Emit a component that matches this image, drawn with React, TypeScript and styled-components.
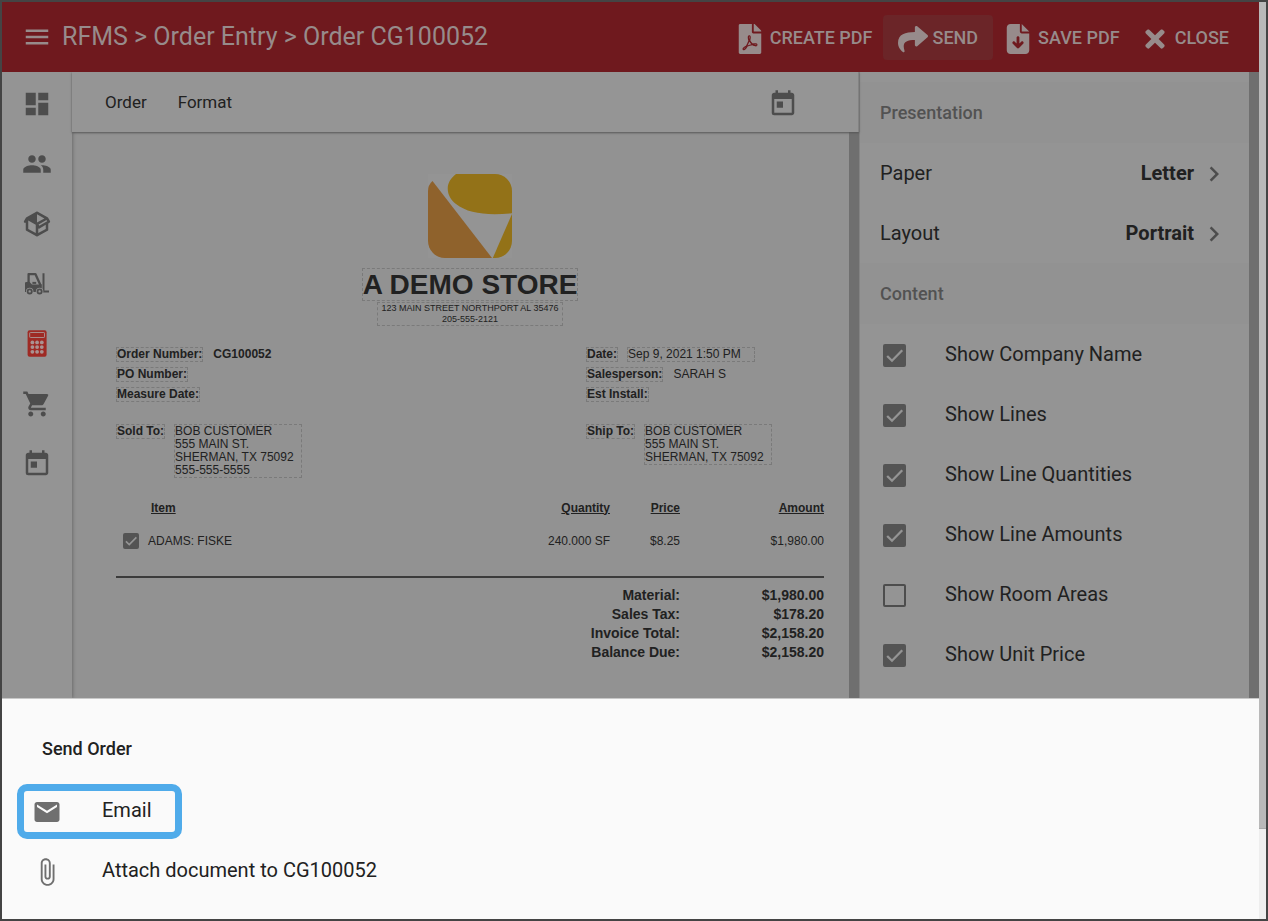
import React from 'react';
import styled, { createGlobalStyle, css } from 'styled-components';
import {
  MdAttachFile,
  MdChevronRight,
  MdDashboard,
  MdEmail,
  MdMenu,
  MdPeople,
  MdShoppingCart,
  MdToday,
} from 'react-icons/md';
import { FaFilePdf, FaShare, FaTimes } from 'react-icons/fa';
import { FaFileArrowDown } from 'react-icons/fa6';

const color = {
  frame: '#444444',
  header: '#6f191e',
  headerActive: '#6b2528',
  headerText: '#978b8b',
  surface: '#949494',
  page: '#929292',
  icon: '#4d4d4d',
  text: '#212121',
  muted: '#525252',
  gutter: '#6f6f6f',
};

const GlobalStyle = createGlobalStyle`
  * { box-sizing: border-box; }
  body { margin: 0; background: ${color.surface}; }
  button { font: inherit; color: inherit; background: none; border: 0; padding: 0; cursor: pointer; text-align: left; }
  svg { display: block; flex: none; }
`;

const Frame = styled.div`
  display: flex;
  min-height: 100vh;
  border: 2px solid ${color.frame};
  font-family: Roboto, 'Liberation Sans', sans-serif;
  color: ${color.text};
`;

const Content = styled.div`
  flex: 1;
  min-width: 0;
  display: flex;
  flex-direction: column;
`;

const ScrollTrack = styled.div`
  width: 7px;
  background: #eeeeee;
`;

const ScrollThumb = styled.div`
  height: 90.2%;
  background: #b9b9b9;
  border-bottom: 1px solid #a8a8a8;
`;

const Header = styled.header`
  display: flex;
  align-items: center;
  height: 70px;
  padding: 0 20px;
  background: ${color.header};
  color: ${color.headerText};
`;

const Title = styled.h1`
  flex: 1;
  margin: 0 0 0 10px;
  font-size: 25px;
  font-weight: 400;
  line-height: 30px;
  white-space: nowrap;
`;

const Actions = styled.div`
  display: flex;
  align-items: center;
`;

const Action = styled.button<{ $active?: boolean }>`
  display: flex;
  align-items: center;
  gap: 5px;
  height: 45px;
  padding: 0 ${p => (p.$active ? 15 : 10)}px;
  border-radius: 4px;
  background: ${p => (p.$active ? color.headerActive : 'transparent')};
  font-size: 18px;
  font-weight: 500;
  white-space: nowrap;
`;

const ActionIcon = styled.span`
  display: flex;
  justify-content: center;
  width: 30px;
  padding-top: 3px;
`;

const Workspace = styled.div`
  flex: 1;
  display: flex;
  overflow: hidden;
`;

const Sidebar = styled.nav`
  display: flex;
  flex-direction: column;
  width: 70px;
  padding-top: 2px;
  background: ${color.surface};
  box-shadow: 1px 0 3px #6c6c6c;
  z-index: 1;
`;

const NavButton = styled.button<{ $active?: boolean }>`
  display: flex;
  align-items: center;
  justify-content: center;
  height: 60px;
  color: ${p => (p.$active ? '#9e2a24' : color.icon)};
`;

const Main = styled.main`
  flex: 1;
  min-width: 0;
  display: flex;
  flex-direction: column;
`;

const Toolbar = styled.div`
  display: flex;
  align-items: center;
  gap: 31px;
  height: 60px;
  padding: 0 60px 0 33px;
  background: #959595;
  border-right: 1px solid #838383;
  box-shadow: 0 1px 2px #555555;
  color: ${color.icon};
  z-index: 1;
`;

const ToolbarMenu = styled.button`
  font-size: 17px;
  line-height: 24px;
  color: ${color.text};
`;

const ToolbarIcon = styled.button`
  margin-left: auto;
  padding-top: 3px;
`;

const DocumentPane = styled.div`
  flex: 1;
  padding: 42px 25px 30px 44px;
  background: ${color.page};
  border-right: 10px solid ${color.gutter};
  font-family: 'Liberation Sans', Arial, sans-serif;
  font-size: 12px;
  line-height: 13px;
`;

const dashed = css`
  border: 1px dashed #7a7a7a;
`;

const Letterhead = styled.div`
  display: flex;
  flex-direction: column;
  align-items: center;
  text-align: center;
`;

const StoreName = styled.h2`
  ${dashed}
  margin: 10px 0 1px;
  font-size: 28px;
  line-height: 31px;
  white-space: nowrap;
`;

const StoreAddress = styled.address`
  ${dashed}
  padding: 0 3px;
  font-size: 9px;
  font-style: normal;
  line-height: 11px;
  white-space: nowrap;
`;

const Details = styled.div`
  display: flex;
  justify-content: space-between;
  margin-top: 21px;
`;

const DetailColumn = styled.dl`
  display: flex;
  flex-direction: column;
  gap: 5px;
  width: 238px;
  margin: 0;
`;

const Detail = styled.div<{ $spaced?: boolean }>`
  display: flex;
  align-items: flex-start;
  gap: 9px;
  margin-top: ${p => (p.$spaced ? 17 : 0)}px;
`;

const DetailLabel = styled.dt`
  ${dashed}
  font-weight: 700;
  white-space: nowrap;
`;

const DetailValue = styled.dd<{ $boxed?: boolean; $bold?: boolean }>`
  margin: 0;
  border: 1px ${p => (p.$boxed ? 'dashed #7a7a7a' : 'solid transparent')};
  width: ${p => (p.$boxed ? '128px' : 'auto')};
  font-weight: ${p => (p.$bold ? 700 : 400)};
  white-space: pre-line;
`;

const Lines = styled.table`
  width: 100%;
  margin-top: 22px;
  border-collapse: collapse;

  th,
  td {
    padding: 0;
    text-align: right;
  }

  th {
    height: 16px;
    text-decoration: underline;
  }

  td {
    height: 50px;
  }

  th:first-child {
    padding-left: 35px;
    text-align: left;
  }
`;

const PriceCol = styled.col`
  width: 70px;
`;

const AmountCol = styled.col`
  width: 144px;
`;

const LineItem = styled.label`
  display: flex;
  align-items: center;
  gap: 9px;
  padding-left: 7px;
`;

const Totals = styled.table`
  width: 100%;
  margin-top: 10px;
  border-top: 2px solid #3b3b3b;
  border-spacing: 0;
  padding-top: 8px;
  font-size: 14px;
  font-weight: 700;
  line-height: 19px;

  th,
  td {
    padding: 0;
    text-align: right;
  }
`;

const Options = styled.aside`
  width: 400px;
  padding-top: 10px;
  background: ${color.surface};
  border-left: 1px solid #838383;
  border-right: 10px solid ${color.gutter};
`;

const OptionsHeading = styled.h2`
  margin: 0;
  padding: 1px 20px 0;
  background: ${color.page};
  color: ${color.muted};
  font-size: 18px;
  font-weight: 500;
  line-height: 60px;
`;

const optionRow = css`
  display: flex;
  align-items: center;
  width: 100%;
  height: 60px;
  padding: 0 20px;
  font-size: 20px;
  line-height: 24px;
`;

const OptionLink = styled.button`
  ${optionRow}
  gap: 5px;
`;

const OptionName = styled.span`
  flex: 1;
`;

const OptionValue = styled.strong`
  font-weight: 700;
`;

const Chevron = styled(MdChevronRight)`
  margin-top: 2px;
  color: ${color.icon};
`;

const CheckBox = styled.span<{ $size: number }>`
  display: grid;
  flex: none;
  width: ${p => p.$size}px;
  height: ${p => p.$size}px;

  input,
  svg {
    grid-area: 1 / 1;
    width: 100%;
    height: 100%;
  }

  input {
    appearance: none;
    margin: 0;
    border: 2px solid ${color.icon};
    border-radius: 2px;
  }

  input:checked {
    border-color: #545454;
    background: #545454;
  }

  svg {
    pointer-events: none;
    visibility: hidden;
  }

  input:checked + svg {
    visibility: visible;
  }
`;

const OptionCheck = styled.label`
  ${optionRow}
  gap: 39px;
  padding-left: 23px;

  ${CheckBox} {
    margin-top: 2px;
  }
`;

const Sheet = styled.section`
  padding: 20px 0 18px;
  background: #fafafa;
  border-top: 1px solid #c8c8c8;
`;

const SheetTitle = styled.h2`
  margin: 0;
  padding-left: 40px;
  font-size: 18px;
  font-weight: 500;
  line-height: 60px;
`;

const SheetList = styled.ul`
  margin: 0;
  padding: 2px 15px 0;
  list-style: none;
`;

const SheetItem = styled.li`
  display: flex;
  align-items: center;
  height: 60px;
`;

const SheetAction = styled.button<{ $highlighted?: boolean }>`
  display: flex;
  align-items: center;
  gap: 40px;
  height: 55px;
  padding: 0 23px 2px 8px;
  border: 7px solid ${p => (p.$highlighted ? '#4fabea' : 'transparent')};
  border-radius: 10px;
  font-size: 20px;
  line-height: 24px;

  svg {
    margin-top: 4px;
    color: #6f6f6f;
  }
`;

function Check({ size, on }: { size: number; on: boolean }) {
  return (
    <CheckBox $size={size}>
      <input type="checkbox" defaultChecked={on} />
      <svg viewBox="0 0 22 22" fill="none" stroke={color.surface} strokeWidth="2.2" aria-hidden="true">
        <path d="M4 11.5 8.6 16 18.4 6" />
      </svg>
    </CheckBox>
  );
}

function BoxIcon() {
  return (
    <svg width="30" height="30" viewBox="0 0 24 24" fill="currentColor" aria-hidden="true">
      <path d="M2,10.96C1.5,10.68 1.35,10.07 1.63,9.59L3.13,7C3.24,6.8 3.41,6.66 3.6,6.58L11.43,2.18C11.59,2.06 11.79,2 12,2C12.21,2 12.41,2.06 12.57,2.18L20.47,6.62C20.66,6.72 20.82,6.88 20.91,7.08L22.36,9.6C22.64,10.08 22.47,10.69 22,10.96L21,11.54V16.5C21,16.88 20.79,17.21 20.47,17.38L12.57,21.82C12.41,21.94 12.21,22 12,22C11.79,22 11.59,21.94 11.43,21.82L3.53,17.38C3.21,17.21 3,16.88 3,16.5V10.96C2.7,11.13 2.32,11.14 2,10.96M12,4.15V10.85L17.96,7.5L12,4.15M5,15.91L11,19.29V12.58L5,9.21V15.91M19,15.91V12.69L14,15.59C13.67,15.77 13.3,15.76 13,15.6V19.29L19,15.91M13.85,13.36L20.13,9.73L19.55,8.72L13.27,12.35L13.85,13.36Z" />
    </svg>
  );
}

function ForkliftIcon() {
  return (
    <svg width="30" height="30" viewBox="0 0 30 30" fill="none" stroke="currentColor" aria-hidden="true">
      <path d="M6.6 14V5.1H13.4L18.6 16.5" strokeWidth="2.3" strokeLinejoin="round" />
      <path d="M3 13.6Q5.4 12.4 7.6 13L10 15.6H19.8V23H3Z" fill="currentColor" stroke="none" />
      <path d="M10.4 13.9H14.2" strokeWidth="2" />
      <path d="M21.5 4.2V22.6H27" strokeWidth="2" />
      <circle cx="7.7" cy="22.4" r="3.7" fill={color.surface} stroke="none" />
      <circle cx="17.6" cy="22.4" r="3.7" fill={color.surface} stroke="none" />
      <circle cx="7.7" cy="22.4" r="2.1" strokeWidth="1.8" />
      <circle cx="17.6" cy="22.4" r="2.1" strokeWidth="1.8" />
    </svg>
  );
}

function CalculatorIcon() {
  return (
    <svg width="30" height="30" viewBox="0 0 30 30" aria-hidden="true">
      <rect x="5.6" y="1.2" width="19" height="26.6" rx="2" fill="currentColor" />
      <rect x="7.7" y="3.5" width="14.8" height="5" rx=".6" fill="none" stroke="#a98b89" strokeWidth="1" />
      {[10.4, 15.1, 19.8].map(x =>
        [13.4, 18.1, 22.8].map(y => <circle key={`${x}-${y}`} cx={x} cy={y} r="1.9" fill="#aa9291" />),
      )}
    </svg>
  );
}

function StoreLogo() {
  return (
    <svg width="84" height="84" viewBox="0 0 84 84" role="img" aria-label="A Demo Store">
      <rect width="84" height="84" fill="#949494" />
      <path d="M4.5 7 64 84H17A17 17 0 0 1 0 67V17Q0 11 4.5 7Z" fill="#8f622c" />
      <path d="M28 0H67A17 17 0 0 1 84 17V39.2C60 41.8 40 39.6 28 30C18 22 16 9 28 0Z" fill="#937218" />
      <path d="M84 40V67A17 17 0 0 1 67 84H64.8Z" fill="#937218" />
    </svg>
  );
}

const navItems = [
  { label: 'Dashboard', icon: <MdDashboard size={30} /> },
  { label: 'Customers', icon: <MdPeople size={30} /> },
  { label: 'Products', icon: <BoxIcon /> },
  { label: 'Inventory', icon: <ForkliftIcon /> },
  { label: 'Order Entry', icon: <CalculatorIcon />, active: true },
  { label: 'Purchasing', icon: <MdShoppingCart size={30} /> },
  { label: 'Schedule', icon: <MdToday size={30} /> },
];

const actions = [
  { label: 'CREATE PDF', icon: <FaFilePdf size={30} /> },
  { label: 'SEND', icon: <FaShare size={30} />, active: true },
  { label: 'SAVE PDF', icon: <FaFileArrowDown size={30} /> },
  { label: 'CLOSE', icon: <FaTimes size={28} /> },
];

const totals = [
  ['Material:', '$1,980.00'],
  ['Sales Tax:', '$178.20'],
  ['Invoice Total:', '$2,158.20'],
  ['Balance Due:', '$2,158.20'],
];

const contentOptions: [string, boolean][] = [
  ['Show Company Name', true],
  ['Show Lines', true],
  ['Show Line Quantities', true],
  ['Show Line Amounts', true],
  ['Show Room Areas', false],
  ['Show Unit Price', true],
];

export default function App() {
  return (
    <Frame>
      <GlobalStyle />
      <Content>
        <Header>
          <button aria-label="Menu">
            <MdMenu size={30} />
          </button>
          <Title>RFMS &gt; Order Entry &gt; Order CG100052</Title>
          <Actions>
            {actions.map(a => (
              <Action key={a.label} $active={a.active}>
                <ActionIcon>{a.icon}</ActionIcon>
                {a.label}
              </Action>
            ))}
          </Actions>
        </Header>

        <Workspace>
          <Sidebar>
            {navItems.map(n => (
              <NavButton key={n.label} aria-label={n.label} $active={n.active}>
                {n.icon}
              </NavButton>
            ))}
          </Sidebar>

          <Main>
            <Toolbar>
              <ToolbarMenu>Order</ToolbarMenu>
              <ToolbarMenu>Format</ToolbarMenu>
              <ToolbarIcon aria-label="Pick date">
                <MdToday size={30} />
              </ToolbarIcon>
            </Toolbar>

            <DocumentPane>
              <Letterhead>
                <StoreLogo />
                <StoreName>A DEMO STORE</StoreName>
                <StoreAddress>
                  123 MAIN STREET NORTHPORT AL 35476
                  <br />
                  205-555-2121
                </StoreAddress>
              </Letterhead>

              <Details>
                <DetailColumn>
                  <Detail>
                    <DetailLabel>Order Number:</DetailLabel>
                    <DetailValue $bold>CG100052</DetailValue>
                  </Detail>
                  <Detail>
                    <DetailLabel>PO Number:</DetailLabel>
                  </Detail>
                  <Detail>
                    <DetailLabel>Measure Date:</DetailLabel>
                  </Detail>
                  <Detail $spaced>
                    <DetailLabel>Sold To:</DetailLabel>
                    <DetailValue $boxed>
                      {'BOB CUSTOMER\n555 MAIN ST.\nSHERMAN, TX 75092\n555-555-5555'}
                    </DetailValue>
                  </Detail>
                </DetailColumn>
                <DetailColumn>
                  <Detail>
                    <DetailLabel>Date:</DetailLabel>
                    <DetailValue $boxed>Sep 9, 2021 1:50 PM</DetailValue>
                  </Detail>
                  <Detail>
                    <DetailLabel>Salesperson:</DetailLabel>
                    <DetailValue>SARAH S</DetailValue>
                  </Detail>
                  <Detail>
                    <DetailLabel>Est Install:</DetailLabel>
                  </Detail>
                  <Detail $spaced>
                    <DetailLabel>Ship To:</DetailLabel>
                    <DetailValue $boxed>{'BOB CUSTOMER\n555 MAIN ST.\nSHERMAN, TX 75092'}</DetailValue>
                  </Detail>
                </DetailColumn>
              </Details>

              <Lines>
                <colgroup>
                  <col />
                  <col />
                  <PriceCol />
                  <AmountCol />
                </colgroup>
                <thead>
                  <tr>
                    <th>Item</th>
                    <th>Quantity</th>
                    <th>Price</th>
                    <th>Amount</th>
                  </tr>
                </thead>
                <tbody>
                  <tr>
                    <td>
                      <LineItem>
                        <Check size={16} on />
                        ADAMS: FISKE
                      </LineItem>
                    </td>
                    <td>240.000 SF</td>
                    <td>$8.25</td>
                    <td>$1,980.00</td>
                  </tr>
                </tbody>
              </Lines>

              <Totals>
                <colgroup>
                  <col />
                  <AmountCol />
                </colgroup>
                <tbody>
                  {totals.map(([label, value]) => (
                    <tr key={label}>
                      <th scope="row">{label}</th>
                      <td>{value}</td>
                    </tr>
                  ))}
                </tbody>
              </Totals>
            </DocumentPane>
          </Main>

          <Options>
            <OptionsHeading>Presentation</OptionsHeading>
            <OptionLink>
              <OptionName>Paper</OptionName>
              <OptionValue>Letter</OptionValue>
              <Chevron size={30} />
            </OptionLink>
            <OptionLink>
              <OptionName>Layout</OptionName>
              <OptionValue>Portrait</OptionValue>
              <Chevron size={30} />
            </OptionLink>
            <OptionsHeading>Content</OptionsHeading>
            {contentOptions.map(([label, on]) => (
              <OptionCheck key={label}>
                <Check size={23} on={on} />
                {label}
              </OptionCheck>
            ))}
          </Options>
        </Workspace>

        <Sheet>
          <SheetTitle>Send Order</SheetTitle>
          <SheetList>
            <SheetItem>
              <SheetAction $highlighted>
                <MdEmail size={30} />
                Email
              </SheetAction>
            </SheetItem>
            <SheetItem>
              <SheetAction>
                <MdAttachFile size={30} />
                Attach document to CG100052
              </SheetAction>
            </SheetItem>
          </SheetList>
        </Sheet>
      </Content>
      <ScrollTrack>
        <ScrollThumb />
      </ScrollTrack>
    </Frame>
  );
}
